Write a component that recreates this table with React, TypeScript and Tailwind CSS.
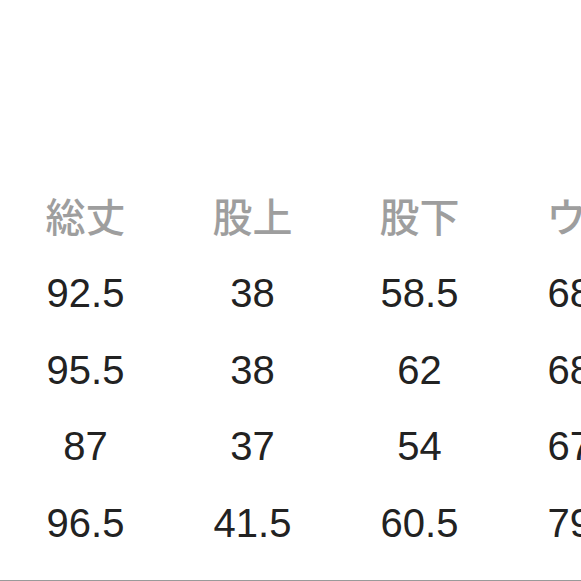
const headers = ['総丈', '股上', '股下', 'ウエ'];

const rows = [
  ['92.5', '38', '58.5', '68.5'],
  ['95.5', '38', '62', '68.5'],
  ['87', '37', '54', '67.5'],
  ['96.5', '41.5', '60.5', '79.5'],
];

export default function App() {
  return (
    <div className="w-[581px] h-[581px] overflow-hidden bg-white flex flex-col border-b border-[#9a9a9a]">
      {/* size table */}
      <div className="pt-[174px] pl-[2px]">
        <div className="flex h-[81px] items-center">
          {headers.map((h) => (
            <div
              key={h}
              className="w-[167px] shrink-0 text-center text-[40px] font-medium text-[#9e9e9e] whitespace-nowrap"
              style={{ fontFamily: '"Noto Sans CJK JP", sans-serif' }}
            >
              {h}
            </div>
          ))}
        </div>
        {rows.map((row, i) => (
          <div key={i} className="flex h-[76.5px] items-center">
            {row.map((v, j) => (
              <div
                key={j}
                className="w-[167px] shrink-0 text-center text-[40px] text-[#222] whitespace-nowrap"
                style={{ fontFamily: '"Liberation Sans", Arial, sans-serif' }}
              >
                {v}
              </div>
            ))}
          </div>
        ))}
      </div>
    </div>
  );
}
